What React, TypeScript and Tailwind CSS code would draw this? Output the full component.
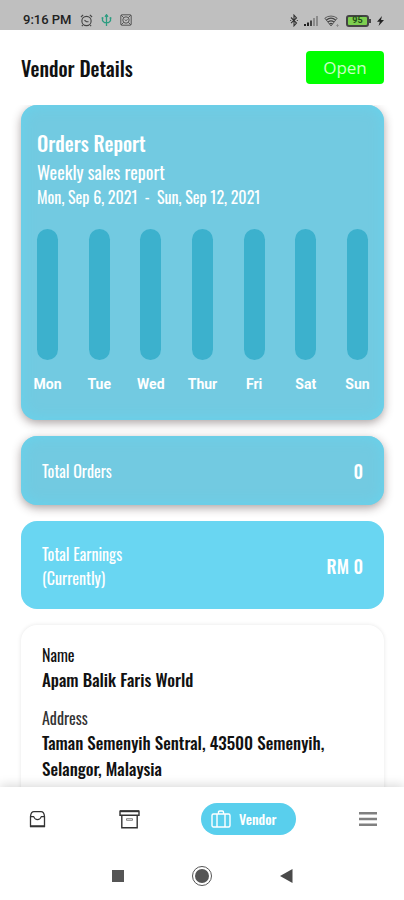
const week = ["Mon", "Tue", "Wed", "Thur", "Fri", "Sat", "Sun"];

const shadedCard =
  "rounded-2xl bg-[#72cae1] text-white shadow-[0_3px_10px_rgba(60,40,40,0.42),inset_0_0_14px_#66d4ee]";

function StatusBar() {
  return (
    <div className="flex h-[30px] shrink-0 items-end justify-between bg-[#bfbfbf] pr-5 pl-[23px] pb-[2px] font-['Roboto',sans-serif] text-[#222]">
      <div className="flex items-center gap-2">
        <span className="text-[13px] leading-4 font-medium">9:16 PM</span>
        {/* Alarm */}
        <svg width="13" height="13" viewBox="0 0 14 14" fill="none" stroke="#444" strokeWidth="1.2">
          <circle cx="7" cy="7.5" r="5" />
          <path d="M1 3.2 3.4 1M13 3.2 10.6 1M4.8 6.8 7 8.3h2.2M3 12l-1 1M11 12l1 1" />
        </svg>
        {/* USB */}
        <svg width="11" height="13" viewBox="0 0 11 13" fill="none" stroke="#2c9c80" strokeWidth="1.3">
          <path d="M5.5 1v11M1.5 3.5v3.2l2 2h4l2-2V3.5" />
          <path d="M4 2.8 5.5 .7 7 2.8M.7 4h1.6M8.7 4h1.6" />
        </svg>
        <svg width="12" height="12" viewBox="0 0 12 12" fill="none" stroke="#555" strokeWidth="1">
          <rect x=".8" y=".8" width="10.4" height="10.4" rx="1" />
          <circle cx="6" cy="6" r="3.2" />
          <path d="m1 1 2.6 2.6M11 1 8.4 3.6M1 11l2.6-2.6M11 11 8.4 8.4M4.8 5.5 6 6.8l1.5-1.6" />
        </svg>
      </div>
      <div className="flex items-center gap-[6px] pb-[1px]">
        <svg width="8" height="13" viewBox="0 0 8 13" fill="none" stroke="#333" strokeWidth="1.1">
          <path d="m1 3.5 5.5 5.5L4 11.8V1.2L6.5 4 1 9.2" />
          <path d="M.2 6.5h1M6.8 6.5h1" />
        </svg>
        <svg width="14" height="11" viewBox="0 0 14 11">
          <path d="M0 9h2v2H0zM3 7.5h2V11H3z" fill="#222" />
          <path d="M6 5.5h2V11H6z" fill="#444" />
          <path d="M9 3h2v8H9zM12 1h2v10h-2z" fill="#8b8b8b" />
        </svg>
        <svg width="16" height="12" viewBox="0 0 16 12" fill="none" stroke="#444" strokeWidth="1.3">
          <path d="M.8 3.2a10 10 0 0 1 12.4 0L7 11z" strokeWidth=".8" />
          <path d="M2.4 5a7.4 7.4 0 0 1 9.2 0M4 7a5 5 0 0 1 6 0M5.5 9a2.4 2.4 0 0 1 3 0" />
          <path d="M13.5 9v3M12.2 10.5h2.6" stroke="#888" strokeWidth=".8" />
        </svg>
        <div className="flex items-center">
          <div className="flex h-3 w-[23px] items-center justify-center rounded-[3px] border-2 border-[#444] bg-[#7dcf50] text-[9px] leading-none font-bold text-[#234d17]">
            95
          </div>
          <div className="h-1 w-[2px] bg-[#444]" />
        </div>
        <svg width="7" height="10" viewBox="0 0 7 10" fill="#222">
          <path d="M5 0 0 5.8h2.8L1.6 10 7 4H4z" />
        </svg>
      </div>
    </div>
  );
}

function OrdersReport() {
  return (
    <section className={`${shadedCard} px-4 pt-6 pb-[26px]`}>
      <h2 className="text-xl leading-7 font-medium">Orders Report</h2>
      <p className="text-lg leading-[30px]">Weekly sales report</p>
      <p className="text-base leading-5 whitespace-pre">Mon, Sep 6, 2021  -  Sun, Sep 12, 2021</p>
      <div className="mt-[22px] flex justify-between">
        {week.map((day) => (
          <div key={day} className="flex w-[21px] flex-col items-center">
            <div className="h-[131px] w-full rounded-full bg-[#3cb1cd]" />
            <span className="mt-[14px] font-['Roboto',sans-serif] text-sm font-bold">{day}</span>
          </div>
        ))}
      </div>
    </section>
  );
}

function BottomNav() {
  return (
    <nav className="grid h-16 grid-cols-[74fr_110fr_129fr_91fr] items-center justify-items-center">
      <button aria-label="Inbox">
        <svg width="17" height="18" viewBox="0 0 17 18" fill="none" stroke="#333" strokeWidth="1.3">
          <path d="M1.5 16.3V6.5Q2 1.7 5 1.7h7q3 0 3.5 4.8v9.8z" />
          <path d="M1 16.3h15" strokeWidth="2" />
          <path d="M1.5 6.6h3.2C5.5 8.8 6.7 9.6 8.5 9.6s3-.8 3.8-3h3.2" strokeWidth="1.1" />
        </svg>
      </button>
      <button aria-label="Archive">
        <svg width="21" height="19" viewBox="0 0 21 19" fill="none" stroke="#333" strokeWidth="1.4">
          <path d="M1 1.2h19v4H1zM2.8 5.2v12.6h15.4V5.2" />
          <path d="M1 1.2h19" strokeWidth="2" />
          <path d="M7.5 8.7h6v1.6h-6z" stroke="#777" strokeWidth=".9" />
        </svg>
      </button>
      <button className="flex h-8 w-[95px] items-center gap-2 rounded-full bg-[#59cfed] pl-[10px] text-sm font-medium text-white">
        <svg width="20" height="18" viewBox="0 0 20 18" fill="none" stroke="currentColor" strokeWidth="1.4">
          <rect x="1" y="4" width="18" height="13" rx="1.5" />
          <path d="M6 17V4M14 17V4M7.5 4V2.2Q7.5 1 8.7 1h2.6q1.2 0 1.2 1.2V4" />
        </svg>
        Vendor
      </button>
      <button aria-label="Menu" className="justify-self-end pr-[27px]">
        <svg width="18" height="14" viewBox="0 0 18 14" fill="none" stroke="#808080" strokeWidth="2.4">
          <path d="M0 1.2h18M0 7h18M0 12.8h18" />
        </svg>
      </button>
    </nav>
  );
}

function SystemNav() {
  return (
    <div className="flex h-[49px] items-center justify-center gap-[68px]">
      <button aria-label="Recent apps" className="size-3 bg-[#555]" />
      <button aria-label="Home" className="flex size-5 items-center justify-center rounded-full border border-[#555]">
        <span className="size-[14px] rounded-full bg-[#555]" />
      </button>
      <button aria-label="Back">
        <svg width="13" height="14" viewBox="0 0 13 14" fill="#4a4a4a">
          <path d="M12.5 0v14L0 7z" />
        </svg>
      </button>
    </div>
  );
}

export default function App() {
  return (
    <div className="flex h-screen flex-col overflow-hidden bg-white font-['Oswald','Roboto_Condensed','Liberation_Sans_Narrow','Roboto',sans-serif] text-[#111]">
      <StatusBar />

      <header className="flex h-[75px] shrink-0 items-center justify-between pr-5 pl-[21px]">
        <h1 className="text-xl font-medium">Vendor Details</h1>
        <button className="h-[33px] w-[78px] rounded bg-[#00ff00] font-['Open_Sans',sans-serif] text-[17px] text-[#c9ffc4]">
          Open
        </button>
      </header>

      <main className="flex min-h-0 flex-1 flex-col gap-4 overflow-hidden pr-5 pl-[21px]">
        <OrdersReport />

        <section className={`${shadedCard} flex h-[69px] shrink-0 items-center justify-between px-[21px]`}>
          <span className="text-base">Total Orders</span>
          <span className="text-lg font-medium">0</span>
        </section>

        <section className="flex h-[88px] shrink-0 items-center justify-between rounded-2xl bg-[#69d6f2] px-[21px] pt-[2px] text-white">
          <p className="text-base leading-6">
            Total Earnings
            <br />
            (Currently)
          </p>
          <span className="text-lg font-medium">RM 0</span>
        </section>

        <section className="shrink-0 rounded-2xl bg-white px-[21px] pt-[18px] pb-5 shadow-[0_0_4px_rgba(0,0,0,0.1)]">
          <dl>
            <dt className="text-base leading-6">Name</dt>
            <dd className="text-[17px] leading-[26px] font-medium">Apam Balik Faris World</dd>
            <dt className="mt-[13px] text-base leading-6 text-[#333]">Address</dt>
            <dd className="text-[17px] leading-[26px] font-medium">
              Taman Semenyih Sentral, 43500 Semenyih, Selangor, Malaysia
            </dd>
          </dl>
        </section>
      </main>

      <footer className="relative shrink-0 bg-white shadow-[0_-2px_10px_rgba(0,0,0,0.15)]">
        <BottomNav />
        <SystemNav />
      </footer>
    </div>
  );
}
